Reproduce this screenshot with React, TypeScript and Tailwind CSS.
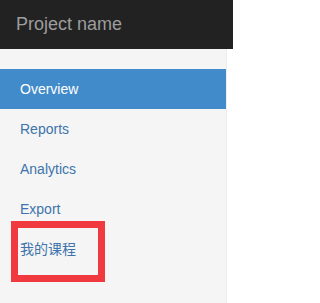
const items = ["Overview", "Reports", "Analytics", "Export", "我的课程"];

export default function App() {
  return (
    <div
      className="flex h-[303px] w-[233px] flex-col bg-white"
      style={{ fontFamily: '"Liberation Sans", "Noto Sans CJK SC", Arial, sans-serif' }}
    >
      <div className="flex h-[49px] shrink-0 items-center bg-[#222222] pl-4 text-[18px] text-[#9d9d9d]">
        Project name
      </div>
      <div className="flex flex-1">
        <div className="w-[227px] border-r border-[#eeeeee] bg-[#f5f5f5] pt-5">
          <ul>
            {items.map((item, i) => (
              <li key={item} className="relative">
                <a
                  href="#"
                  className={
                    i === 0
                      ? "block h-10 bg-[#428bca] px-5 text-[14px] leading-10 text-white"
                      : "block h-10 px-5 text-[14px] leading-10 text-[#3d74ab]"
                  }
                >
                  {item}
                </a>
                {i === items.length - 1 && (
                  <div className="pointer-events-none absolute -top-2 left-[11px] h-[61px] w-[94px] border-[7px] border-[#f03a3f]" />
                )}
              </li>
            ))}
          </ul>
        </div>
      </div>
    </div>
  );
}
